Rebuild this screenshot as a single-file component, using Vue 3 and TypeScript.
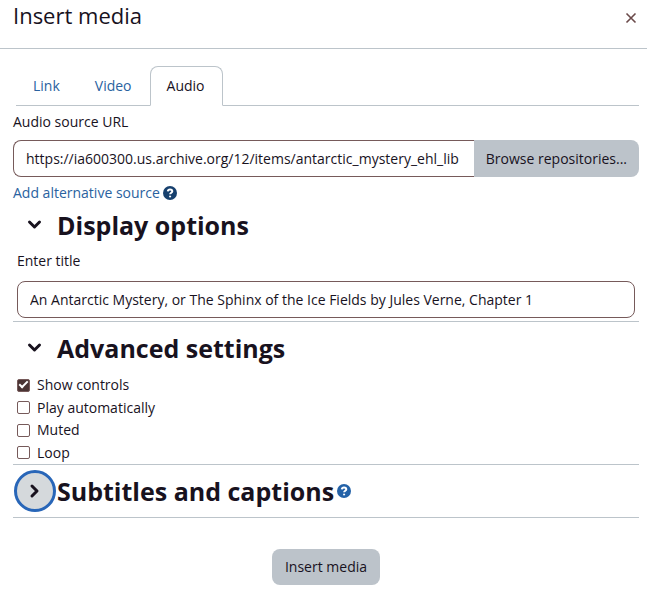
<script setup lang="ts">
import { ref } from 'vue'

type Tab = 'Link' | 'Video' | 'Audio'

interface Option {
  id: string
  label: string
  checked: boolean
}

const chevronDown = 'M2.500 5l5 5 5-5'
const chevronRight = 'M5 3l5 5-5 5'

const tabs: Tab[] = ['Link', 'Video', 'Audio']
const activeTab = ref<Tab>('Audio')
const sourceUrl = ref('https://ia600300.us.archive.org/12/items/antarctic_mystery_ehl_lib')
const title = ref('An Antarctic Mystery, or The Sphinx of the Ice Fields by Jules Verne, Chapter 1')
const displayOpen = ref(true)
const advancedOpen = ref(true)
const subtitlesOpen = ref(false)
const options = ref<Option[]>([
  { id: 'controls', label: 'Show controls', checked: true },
  { id: 'autoplay', label: 'Play automatically', checked: false },
  { id: 'muted', label: 'Muted', checked: false },
  { id: 'loop', label: 'Loop', checked: false },
])
</script>

<template>
  <div class="dialog" role="dialog" aria-labelledby="dialog-title">
    <header class="header">
      <h1 id="dialog-title" class="dialog-title">Insert media</h1>
      <button class="close" type="button" aria-label="Close">
        <svg width="12" height="12" viewBox="0 0 12 12"><path d="M1.500 1.500l9 9M10.500 1.500l-9 9" /></svg>
      </button>
    </header>

    <form class="body" @submit.prevent>
      <div class="tabs" role="tablist">
        <button
          v-for="tab in tabs"
          :key="tab"
          class="tab"
          :class="{ active: tab === activeTab }"
          type="button"
          role="tab"
          :aria-selected="tab === activeTab"
          @click="activeTab = tab"
        >{{ tab }}</button>
      </div>

      <label class="label" for="source">Audio source URL</label>
      <div class="source-row">
        <input id="source" v-model="sourceUrl" class="field joined" type="text">
        <button class="button browse" type="button">Browse repositories...</button>
      </div>
      <div class="alternative">
        <a href="#">Add alternative source</a>
        <button class="help" type="button" aria-label="Help with alternative source">
          <svg class="dark" width="14" height="14" viewBox="0 0 14 14">
            <circle cx="7" cy="7" r="7" />
            <path d="M4.800 5.300C5 4 5.800 3.400 7 3.400c1.300 0 2.300.7 2.300 1.900C9.300 6.700 7.100 6.800 7.100 8.300" />
            <path d="M7.100 9.700v1.600" />
          </svg>
        </button>
      </div>

      <section class="section">
        <div class="section-head">
          <button class="toggle" type="button" aria-label="Display options" :aria-expanded="displayOpen" @click="displayOpen = !displayOpen">
            <svg width="16" height="16" viewBox="0 0 16 16"><path :d="displayOpen ? chevronDown : chevronRight" /></svg>
          </button>
          <h2>Display options</h2>
        </div>
        <div v-if="displayOpen" class="display-fields">
          <label class="label" for="title">Enter title</label>
          <input id="title" v-model="title" class="field" type="text">
        </div>
      </section>

      <section class="section">
        <div class="section-head">
          <button class="toggle" type="button" aria-label="Advanced settings" :aria-expanded="advancedOpen" @click="advancedOpen = !advancedOpen">
            <svg width="16" height="16" viewBox="0 0 16 16"><path :d="advancedOpen ? chevronDown : chevronRight" /></svg>
          </button>
          <h2>Advanced settings</h2>
        </div>
        <div v-if="advancedOpen" class="options">
          <label v-for="option in options" :key="option.id" class="option" :for="option.id">
            <input :id="option.id" v-model="option.checked" type="checkbox">
            <span>{{ option.label }}</span>
          </label>
        </div>
      </section>

      <section class="section">
        <div class="section-head">
          <button class="toggle focused" type="button" aria-label="Subtitles and captions" :aria-expanded="subtitlesOpen" @click="subtitlesOpen = !subtitlesOpen">
            <svg width="16" height="16" viewBox="0 0 16 16"><path :d="subtitlesOpen ? chevronDown : chevronRight" /></svg>
          </button>
          <h2>Subtitles and captions</h2>
          <button class="help spaced" type="button" aria-label="Help with subtitles and captions">
            <svg width="14" height="14" viewBox="0 0 14 14">
              <circle cx="7" cy="7" r="7" />
              <path d="M4.800 5.300C5 4 5.800 3.400 7 3.400c1.300 0 2.300.7 2.300 1.900C9.300 6.700 7.100 6.800 7.100 8.300" />
              <path d="M7.100 9.700v1.600" />
            </svg>
          </button>
        </div>
      </section>

      <footer class="footer">
        <button class="button" type="submit">Insert media</button>
      </footer>
    </form>
  </div>
</template>

<style>
body {
  background: #fff;
}
</style>

<style scoped>
.dialog {
  color: #18121e;
  font-family: "Open Sans", "Noto Sans", sans-serif;
  font-size: 14px;
  line-height: 24px;
}

.dialog button,
.dialog input {
  font: inherit;
  color: inherit;
}

.header {
  display: flex;
  align-items: flex-start;
  justify-content: space-between;
  height: 48px;
  padding: 0 7px 0 13px;
  border-bottom: 1px solid #bcc4ca;
}

.dialog-title {
  margin: 0;
  font-size: 22px;
  font-weight: 400;
  line-height: 30px;
}

.close {
  display: flex;
  margin: 8px 0 0;
  padding: 4px 3px;
  border: 0;
  background: none;
}

.close svg {
  fill: none;
  stroke: #6a4a4a;
  stroke-width: 1.600;
}

.body {
  padding: 17px 8px 0 13px;
}

.tabs {
  display: flex;
  margin-left: 3px;
  border-bottom: 1px solid #bcc4ca;
}

.tab {
  height: 40px;
  margin-bottom: -1px;
  padding: 0 17px 0 16px;
  border: 1px solid transparent;
  border-radius: 8px 8px 0 0;
  background: none;
}

.dialog .tab:not(.active),
.alternative a {
  color: #2a62a0;
}

.dialog .tab.active {
  border-color: #bcc4ca;
  border-bottom-color: #fff;
  background: #fff;
}

.label {
  display: block;
  height: 32px;
  line-height: 32px;
}

.source-row {
  display: flex;
  margin-top: 2px;
}

.field {
  box-sizing: border-box;
  width: 100%;
  height: 37px;
  min-width: 0;
  padding: 0 12px;
  border: 1px solid #765a5a;
  border-radius: 8px;
  background: #fff;
  outline: none;
}

.field.joined {
  flex: 1;
  border-right: 0;
  border-radius: 8px 0 0 8px;
}

.button {
  height: 36px;
  padding: 0 13px;
  border: 0;
  border-radius: 8px;
  background: #bcc3ca;
  white-space: nowrap;
}

.button.browse {
  height: 37px;
  padding: 0 12px;
  border-radius: 0 8px 8px 0;
}

.alternative {
  display: flex;
  align-items: center;
  gap: 3px;
  height: 28px;
  padding-top: 2px;
}

.alternative a {
  text-decoration: none;
}

.help {
  display: flex;
  padding: 0;
  border: 0;
  background: none;
}

.help.spaced {
  margin-left: 3px;
}

.help svg {
  fill: #2462a8;
}

.help svg.dark {
  fill: #17406e;
}

.help path {
  fill: none;
  stroke: #fff;
  stroke-width: 2;
}

.section {
  border-bottom: 1px solid #bcc4ca;
}

.section-head {
  display: flex;
  align-items: center;
  height: 52px;
  padding-left: 1px;
}

.alternative + .section .section-head {
  height: 36px;
}

.section-head h2 {
  margin: 0;
  font-size: 25px;
  font-weight: 700;
  line-height: 32px;
}

.toggle {
  box-sizing: border-box;
  display: flex;
  flex: none;
  align-items: center;
  justify-content: center;
  width: 42px;
  height: 42px;
  margin-right: 1px;
  padding: 0;
  border: 3px solid transparent;
  border-radius: 50%;
  background: none;
}

.toggle svg {
  fill: none;
  stroke: #18121e;
  stroke-width: 3;
  stroke-linecap: round;
  stroke-linejoin: round;
}

.toggle.focused {
  border-color: #2866b8;
  background: #d5d9dc;
}

.display-fields {
  padding: 2px 4px 3px;
}

.display-fields .field {
  margin-top: 4px;
}

.options {
  display: grid;
  grid-auto-rows: 1fr;
  height: 90px;
  padding: 0 4px;
}

.option {
  display: flex;
  align-items: center;
  gap: 7px;
  line-height: 22px;
}

.option input {
  display: grid;
  place-items: center;
  appearance: none;
  box-sizing: border-box;
  width: 13px;
  height: 13px;
  margin: 0;
  border: 1px solid #765a5a;
  border-radius: 2px;
  background: #fff;
}

.option input:checked {
  background: #4a3434;
}

.option input:checked::before {
  width: 7px;
  height: 3px;
  margin-bottom: 3px;
  border: solid #fff;
  border-width: 0 0 2px 2px;
  transform: rotate(-45deg);
  content: "";
}

.footer {
  display: flex;
  justify-content: center;
  padding: 31px 0 8px;
}
</style>
